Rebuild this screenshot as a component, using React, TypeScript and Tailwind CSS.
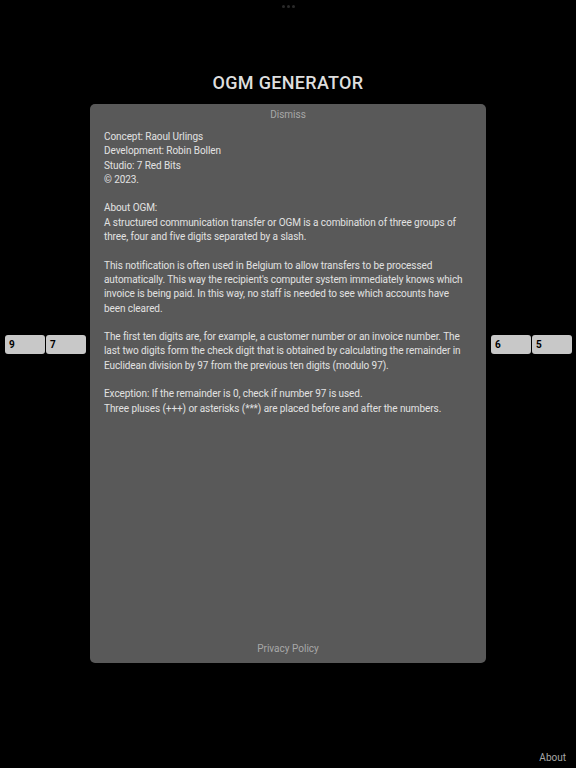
const lines: string[][] = [
  ['Concept: Raoul Urlings', 'Development: Robin Bollen', 'Studio: 7 Red Bits', '© 2023.'],
  ['About OGM:', 'A structured communication transfer or OGM is a combination of three groups of', 'three, four and five digits separated by a slash.'],
  [
    'This notification is often used in Belgium to allow transfers to be processed',
    "automatically. This way the recipient's computer system immediately knows which",
    'invoice is being paid. In this way, no staff is needed to see which accounts have',
    'been cleared.',
  ],
  [
    'The first ten digits are, for example, a customer number or an invoice number. The',
    'last two digits form the check digit that is obtained by calculating the remainder in',
    'Euclidean division by 97 from the previous ten digits (modulo 97).',
  ],
  ['Exception: If the remainder is 0, check if number 97 is used.', 'Three pluses (+++) or asterisks (***) are placed before and after the numbers.'],
];

const Digit = ({ value }: { value: string }) => (
  <div className="w-[40px] h-[19px] rounded-[3px] bg-[#c8c8c8] flex items-center pl-[4px] text-[10px] font-bold text-black">
    {value}
  </div>
);

export default function App() {
  return (
    <div className="w-[576px] h-[768px] bg-black flex flex-col overflow-hidden text-[#dcdcdc] [font-family:Roboto,'Noto_Sans',sans-serif]">
      {/* multitasking dots */}
      <div className="flex justify-center gap-[2px] pt-[5px] h-[10px]">
        <span className="w-[3px] h-[3px] rounded-full bg-[#2a2a2a]" />
        <span className="w-[3px] h-[3px] rounded-full bg-[#2a2a2a]" />
        <span className="w-[3px] h-[3px] rounded-full bg-[#2a2a2a]" />
      </div>

      <h1 className="mt-[59px] text-center text-[18px] leading-[27px] font-medium tracking-[0.3px] text-[#dedede]">
        OGM GENERATOR
      </h1>

      <div className="mt-[8px] flex items-start">
        <div className="ml-[5px] mt-[231px] flex gap-[1px]">
          <Digit value="9" />
          <Digit value="7" />
        </div>

        <div className="ml-[4px] w-[396px] h-[559px] rounded-[5px] bg-[#595959] flex flex-col">
          <div className="pt-[4px] text-center text-[10px] leading-[14px] text-[#a8a8a8]">Dismiss</div>
          <div className="mt-[8px] px-[14px] text-[10px] leading-[14.3px] tracking-[-0.08px] text-[#e2e2e2] flex flex-col gap-[14.3px]">
            {lines.map((group, i) => (
              <div key={i}>
                {group.map((l, j) => (
                  <div key={j} className="whitespace-nowrap">
                    {l}
                  </div>
                ))}
              </div>
            ))}
          </div>
          <div className="mt-auto pb-[7px] text-center text-[10px] leading-[14px] text-[#a8a8a8]">Privacy Policy</div>
        </div>

        <div className="ml-[5px] mt-[231px] flex gap-[1px]">
          <Digit value="6" />
          <Digit value="5" />
        </div>
      </div>

      <div className="mt-auto pb-[3px] pr-[10px] text-right text-[10px] leading-[14px] text-[#a8a8a8]">About</div>
    </div>
  );
}
